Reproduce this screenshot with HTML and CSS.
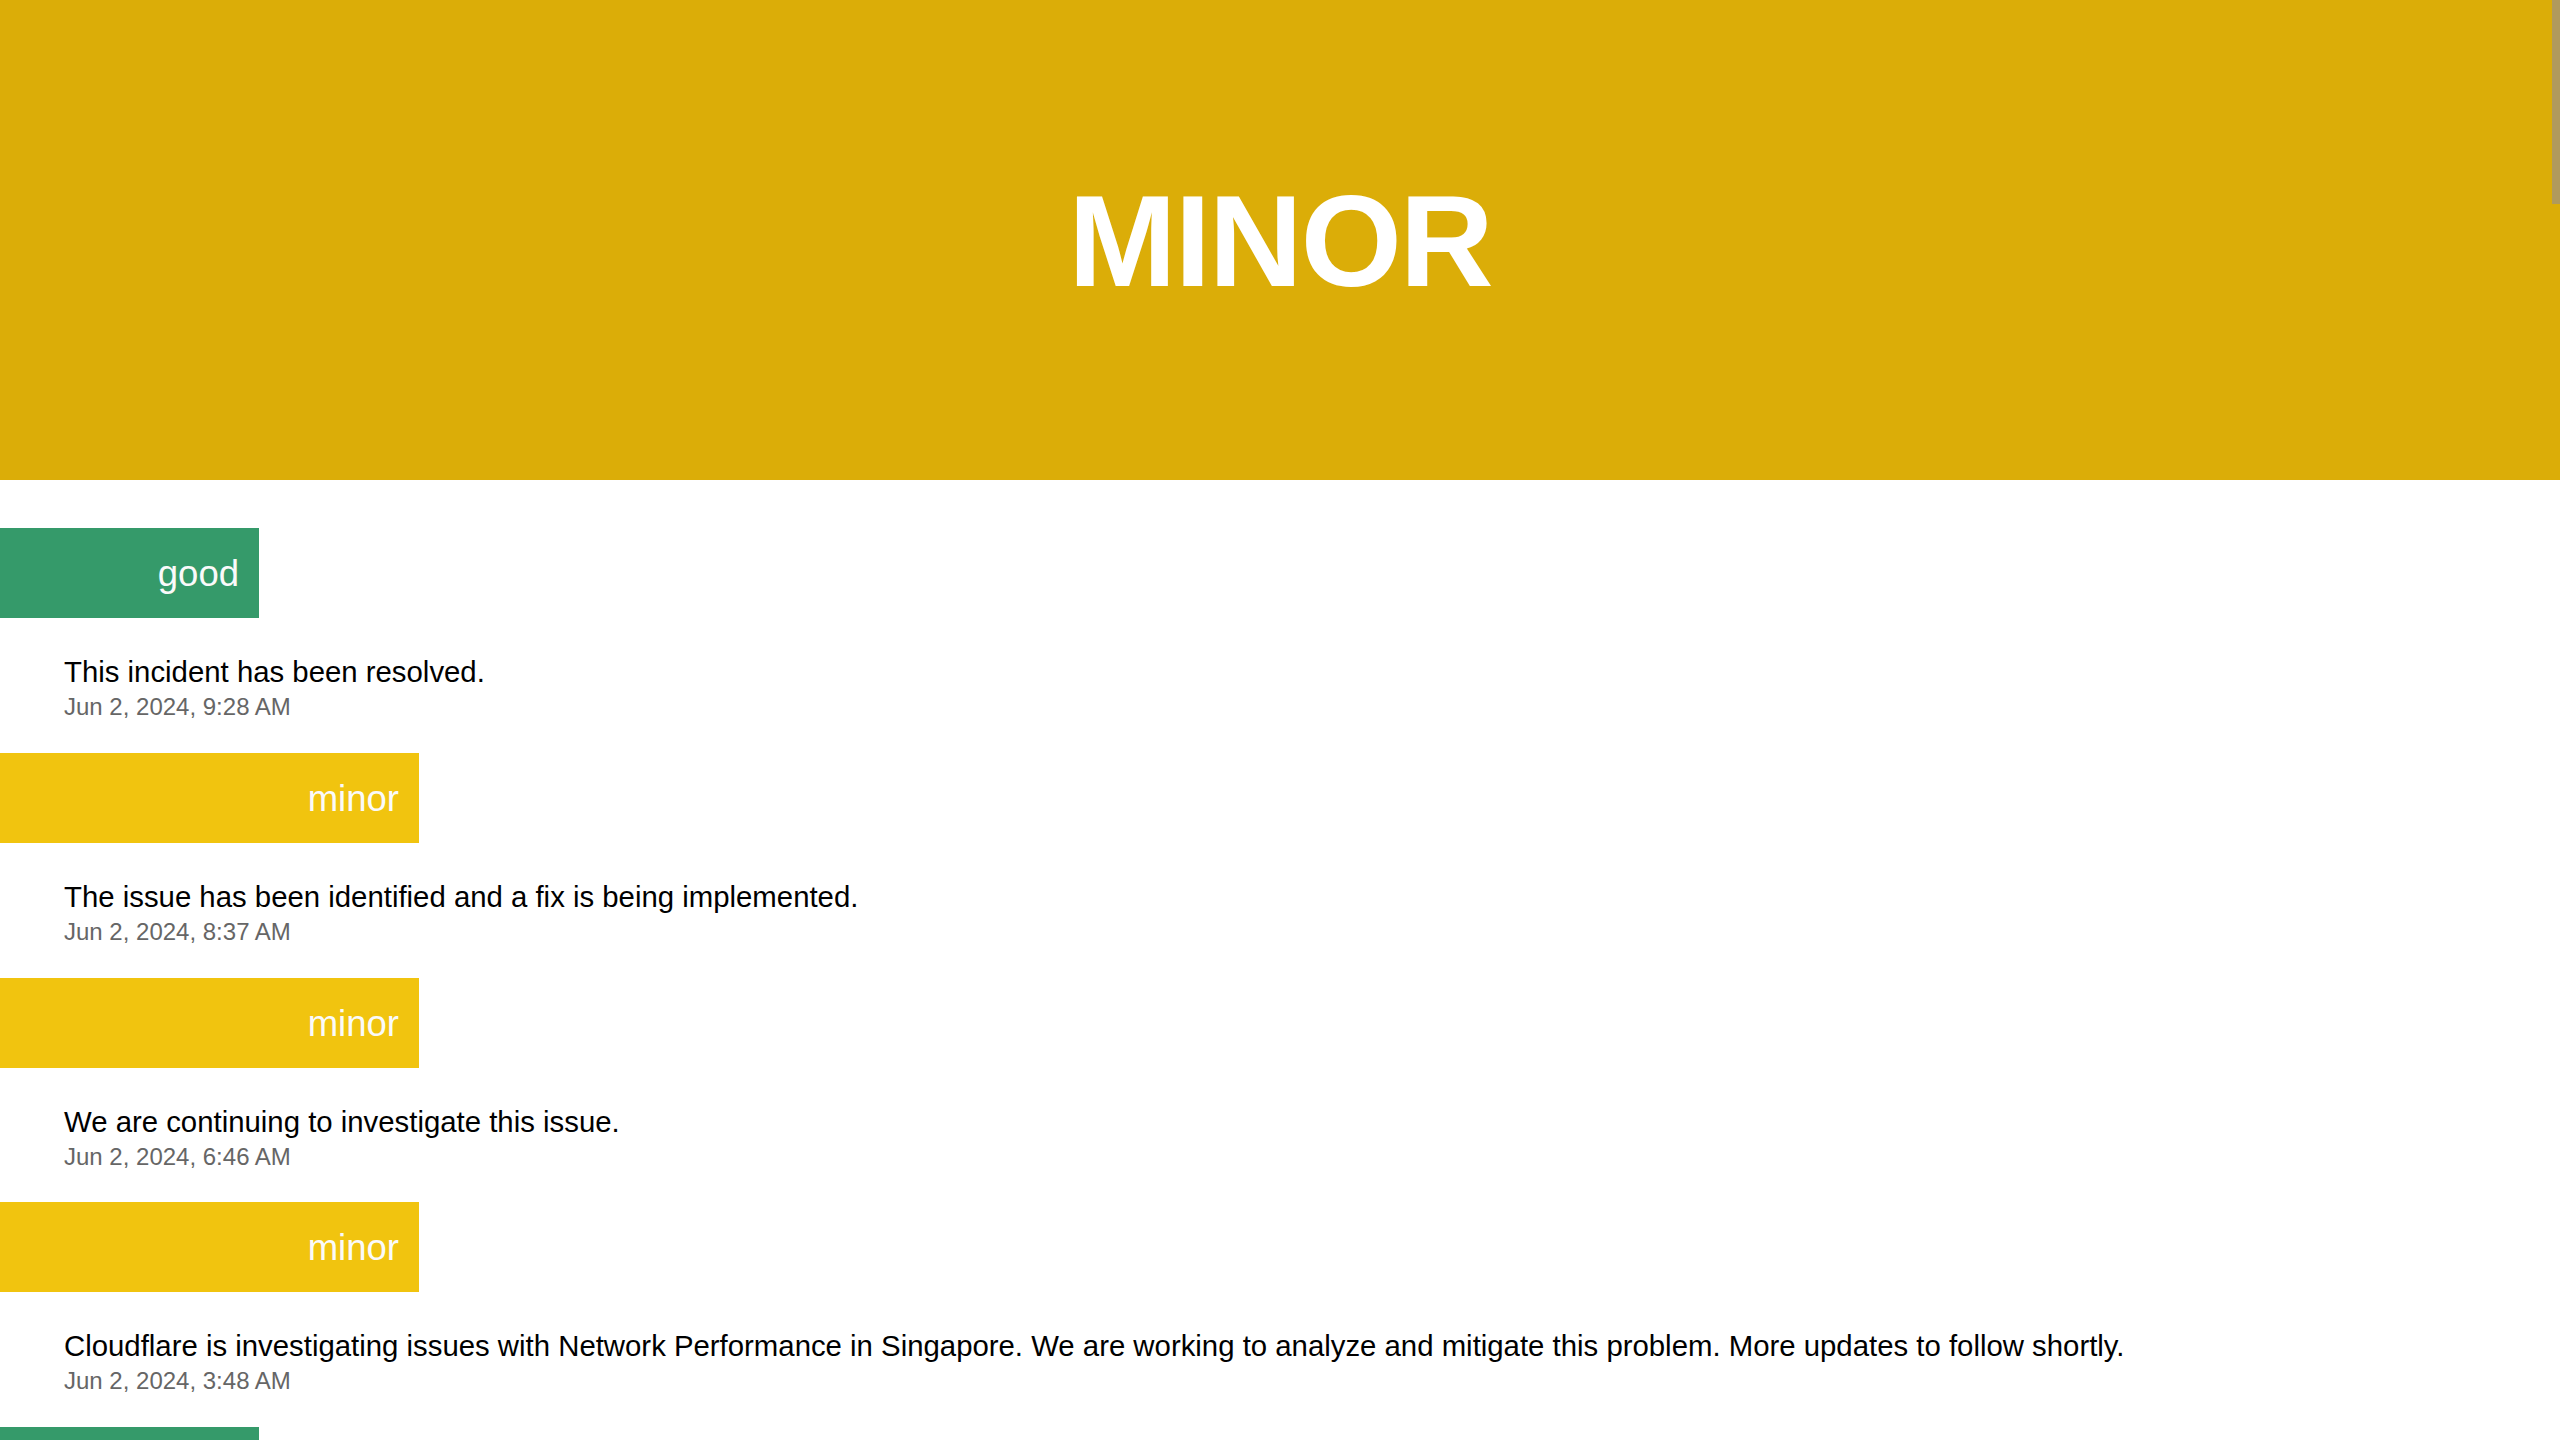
FILE: index.html
```html
<!DOCTYPE html>
<html lang="en">
<head>
<meta charset="utf-8">
<title>MINOR</title>
<link rel="stylesheet" href="styles.css">
</head>
<body>
<header class="hero">
  <h1 class="hero-title">MINOR</h1>
</header>
<main class="updates">
  <section class="update">
    <div class="badge badge-good">good</div>
    <p class="update-text">This incident has been resolved.</p>
    <p class="update-date">Jun 2, 2024, 9:28 AM</p>
  </section>
  <section class="update">
    <div class="badge badge-minor">minor</div>
    <p class="update-text">The issue has been identified and a fix is being implemented.</p>
    <p class="update-date">Jun 2, 2024, 8:37 AM</p>
  </section>
  <section class="update">
    <div class="badge badge-minor">minor</div>
    <p class="update-text">We are continuing to investigate this issue.</p>
    <p class="update-date">Jun 2, 2024, 6:46 AM</p>
  </section>
  <section class="update">
    <div class="badge badge-minor">minor</div>
    <p class="update-text">Cloudflare is investigating issues with Network Performance in Singapore. We are working to analyze and mitigate this problem. More updates to follow shortly.</p>
    <p class="update-date">Jun 2, 2024, 3:48 AM</p>
  </section>
  <section class="update">
    <div class="badge badge-good"></div>
  </section>
</main>
<div class="scroll-thumb"></div>
</body>
</html>
```
FILE: styles.css
```css
html, body {
  margin: 0;
  padding: 0;
  background: #ffffff;
  font-family: "Liberation Sans", Arial, Helvetica, sans-serif;
  overflow: hidden;
}

.hero {
  height: 480px;
  background: #dbad08;
  display: flex;
  align-items: center;
  justify-content: center;
}

.hero-title {
  margin: 0;
  padding-top: 2px;
  font-size: 130px;
  font-weight: 700;
  letter-spacing: -2px;
  color: #ffffff;
  line-height: normal;
}

.updates {
  padding-top: 48px;
  display: flex;
  flex-direction: column;
}

.update {
  display: flex;
  flex-direction: column;
  padding-bottom: 31.75px;
}

.badge {
  height: 90px;
  display: flex;
  align-items: center;
  justify-content: flex-end;
  padding-right: 20px;
  padding-top: 2px;
  box-sizing: border-box;
  font-size: 36.5px;
  color: #fafafa;
}

.badge-good {
  width: 259px;
  background: #359a6a;
}

.badge-minor {
  width: 419px;
  background: #f1c40f;
}

.update-text {
  margin: 37px 0 0 64px;
  font-size: 29.35px;
  line-height: 33px;
  color: #000000;
}

.update-date {
  margin: 5px 0 0 64px;
  font-size: 24px;
  line-height: 28px;
  color: #666666;
}

.scroll-thumb {
  position: fixed;
  top: 0;
  right: 0;
  width: 8px;
  height: 204px;
  background: #b09a5c;
}
```
